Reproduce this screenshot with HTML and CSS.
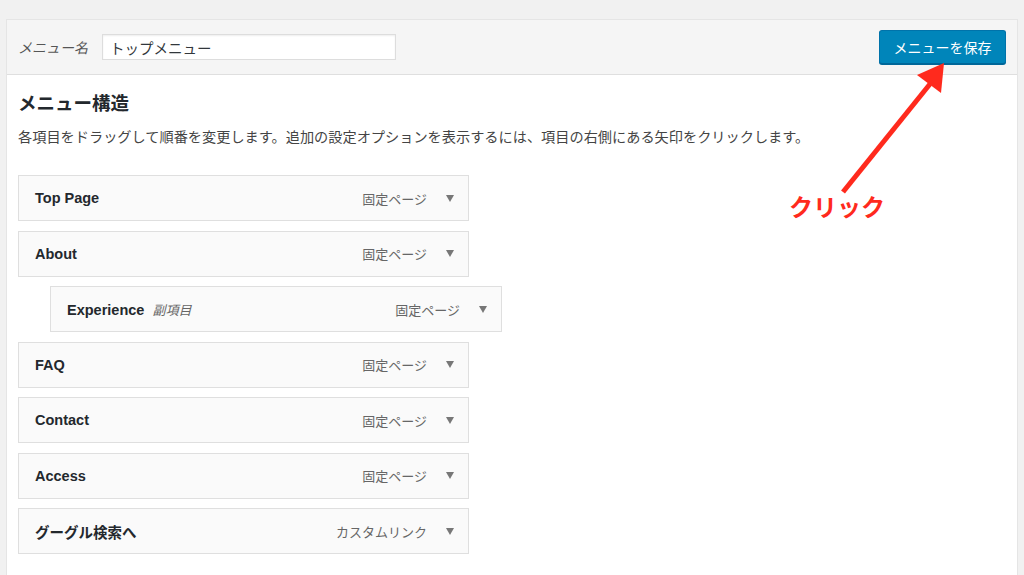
FILE: index.html
```html
<!DOCTYPE html>
<html lang="ja">
<head>
  <meta charset="UTF-8">
  <meta name="viewport" content="width=device-width, initial-scale=1.0">
  <link rel="stylesheet" href="styles.css">
</head>
<body>
  <div class="page">
    <div class="menu-panel">
      <div class="menu-header">
        <label class="menu-name-label" for="menu-name">メニュー名</label>
        <input type="text" id="menu-name" class="menu-name-input" value="トップメニュー">
        <button class="save-button">メニューを保存</button>
      </div>
      <div class="menu-body">
        <h3 class="menu-title">メニュー構造</h3>
        <p class="menu-desc">各項目をドラッグして順番を変更します。追加の設定オプションを表示するには、項目の右側にある矢印をクリックします。</p>
        <ul class="menu-list">
          <li class="menu-item">
            <span class="item-title">Top Page</span>
            <span class="item-type">固定ページ</span>
            <span class="item-arrow"></span>
          </li>
          <li class="menu-item">
            <span class="item-title">About</span>
            <span class="item-type">固定ページ</span>
            <span class="item-arrow"></span>
          </li>
          <li class="menu-item depth-1">
            <span class="item-title">Experience <em class="sub-label">副項目</em></span>
            <span class="item-type">固定ページ</span>
            <span class="item-arrow"></span>
          </li>
          <li class="menu-item">
            <span class="item-title">FAQ</span>
            <span class="item-type">固定ページ</span>
            <span class="item-arrow"></span>
          </li>
          <li class="menu-item">
            <span class="item-title">Contact</span>
            <span class="item-type">固定ページ</span>
            <span class="item-arrow"></span>
          </li>
          <li class="menu-item">
            <span class="item-title">Access</span>
            <span class="item-type">固定ページ</span>
            <span class="item-arrow"></span>
          </li>
          <li class="menu-item">
            <span class="item-title">グーグル検索へ</span>
            <span class="item-type">カスタムリンク</span>
            <span class="item-arrow"></span>
          </li>
        </ul>
      </div>
    </div>

    <!-- annotation -->
    <svg class="callout-arrow" width="1024" height="575" viewBox="0 0 1024 575">
      <line x1="843" y1="192" x2="930" y2="84" stroke="#ff2a1d" stroke-width="5"/>
      <polygon points="944,63 917,75 941,93" fill="#ff2a1d"/>
    </svg>
    <div class="callout-text">クリック</div>
  </div>
</body>
</html>
```

FILE: styles.css
```css
body {
  margin: 0;
  padding: 0;
  background-color: #f1f1f1;
  font-family: "Liberation Sans", "Noto Sans CJK JP", sans-serif;
  color: #23282d;
  overflow: hidden;
}

.page {
  position: relative;
  height: 575px;
  padding: 19px 6px 0 6px;
  box-sizing: border-box;
}

.menu-panel {
  background-color: #fff;
  border: 1px solid #e5e5e5;
  border-bottom: none;
  height: 100%;
}

.menu-header {
  display: flex;
  align-items: center;
  height: 54px;
  padding: 0 11px;
  background-color: #f5f5f5;
  border-bottom: 1px solid #dfdfdf;
}

.menu-name-label {
  font-size: 14px;
  color: #555;
  font-style: italic;
  width: 84px;
}

.menu-name-input {
  width: 294px;
  height: 26px;
  box-sizing: border-box;
  border: 1px solid #ddd;
  box-shadow: inset 0 1px 2px rgba(0, 0, 0, 0.07);
  background-color: #fff;
  padding: 0 7px;
  font-family: "Liberation Sans", "Noto Sans CJK JP", sans-serif;
  font-size: 14.5px;
  color: #32373c;
  outline: none;
}

.save-button {
  margin-left: auto;
  width: 127px;
  height: 34px;
  background-color: #0085ba;
  border: 1px solid #0073aa;
  border-bottom-color: #006799;
  border-radius: 3px;
  box-shadow: 0 1px 0 #006799;
  color: #fff;
  font-family: "Liberation Sans", "Noto Sans CJK JP", sans-serif;
  font-size: 14px;
  padding: 0;
}

.menu-body {
  padding: 16px 11px 0 11px;
}

.menu-title {
  margin: 0;
  font-size: 18.5px;
  line-height: 25px;
  font-weight: bold;
  color: #23282d;
}

.menu-desc {
  margin: 11px 0 0 0;
  font-size: 14.2px;
  line-height: 20px;
  color: #444;
}

.menu-list {
  list-style: none;
  margin: 28px 0 0 0;
  padding: 0;
}

.menu-item {
  display: flex;
  align-items: center;
  width: 451px;
  height: 46px;
  box-sizing: border-box;
  margin-bottom: 9.5px;
  padding: 0 14px 0 16px;
  background-color: #fafafa;
  border: 1px solid #dfdfdf;
}

.menu-item.depth-1 {
  margin-left: 32px;
  width: 452px;
}

.item-title {
  font-size: 14.5px;
  font-weight: bold;
  color: #23282d;
}

.sub-label {
  font-weight: normal;
  font-size: 13px;
  color: #666;
  margin-left: 4px;
}

.item-type {
  margin-left: auto;
  font-size: 13px;
  color: #666;
}

.item-arrow {
  width: 0;
  height: 0;
  margin-left: 19px;
  border-left: 4px solid transparent;
  border-right: 4px solid transparent;
  border-top: 7px solid #777;
}

.callout-arrow {
  position: absolute;
  top: 0;
  left: 0;
  pointer-events: none;
}

.callout-text {
  position: absolute;
  left: 789px;
  top: 193px;
  font-size: 24px;
  font-weight: bold;
  line-height: 30px;
  color: #ff2a1d;
  letter-spacing: 0;
}
```
